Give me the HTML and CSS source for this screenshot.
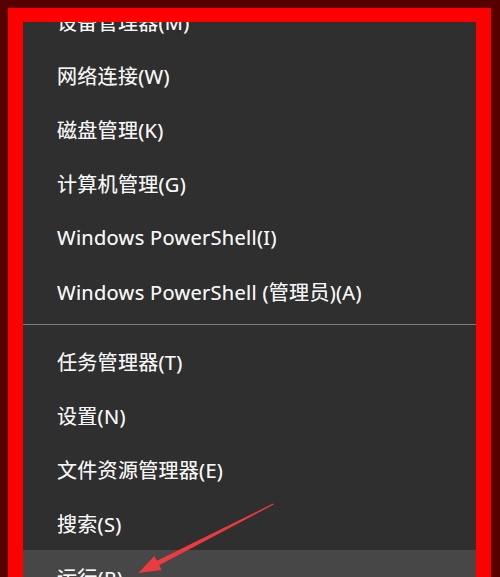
FILE: index.html
```html
<!DOCTYPE html>
<html lang="zh-CN">
<head>
<meta charset="utf-8">
<title>Win+X 菜单</title>
<link rel="stylesheet" href="styles.css">
</head>
<body>
<div class="frame">
  <div class="panel">
    <ul class="menu">
      <li class="item">设备管理器(M)</li>
      <li class="item">网络连接(W)</li>
      <li class="item">磁盘管理(K)</li>
      <li class="item">计算机管理(G)</li>
      <li class="item">Windows PowerShell(I)</li>
      <li class="item">Windows PowerShell (管理员)(A)</li>
      <li class="sep"></li>
      <li class="item">任务管理器(T)</li>
      <li class="item">设置(N)</li>
      <li class="item">文件资源管理器(E)</li>
      <li class="item">搜索(S)</li>
      <li class="item active">运行(R)</li>
    </ul>
  </div>
</div>
<svg class="arrow" width="500" height="577" viewBox="0 0 500 577" aria-hidden="true">
  <polygon points="273,503.6 273.6,504.6 159.1,565.2 161.7,570.1 138.4,573.1 154.3,555.9 156.9,560.8" fill="#ec3a40"/>
</svg>
</body>
</html>
```

FILE: styles.css
```css
html, body {
  margin: 0;
  padding: 0;
}
body {
  width: 500px;
  height: 577px;
  overflow: hidden;
  background: #560000;
  position: relative;
  font-family: "Noto Sans", "Noto Sans CJK SC", sans-serif;
}
.frame {
  margin: 8px 9px 0 8px;
  height: 569px;
  box-sizing: border-box;
  border-top: 14px solid #ff0000;
  border-left: 15px solid #ff0000;
  border-right: 15px solid #ff0000;
  display: flex;
  flex-direction: column;
}
.panel {
  flex: 1;
  background: #2f2f2f;
  overflow: hidden;
}
.menu {
  list-style: none;
  margin: -28px 0 0 0;
  padding: 0;
}
.item {
  height: 54px;
  display: flex;
  align-items: center;
  padding-left: 34px;
  color: #f6f6f6;
  font-size: 20px;
  letter-spacing: 0.3px;
  white-space: nowrap;
  text-shadow: 0 0 0.4px rgba(255, 255, 255, 0.6);
}
.item.active {
  background: #474747;
}
.sep {
  height: 1px;
  background: #7c7c7c;
  margin: 6px 0 9px 0;
}
.arrow {
  position: absolute;
  left: 0;
  top: 0;
}
```
